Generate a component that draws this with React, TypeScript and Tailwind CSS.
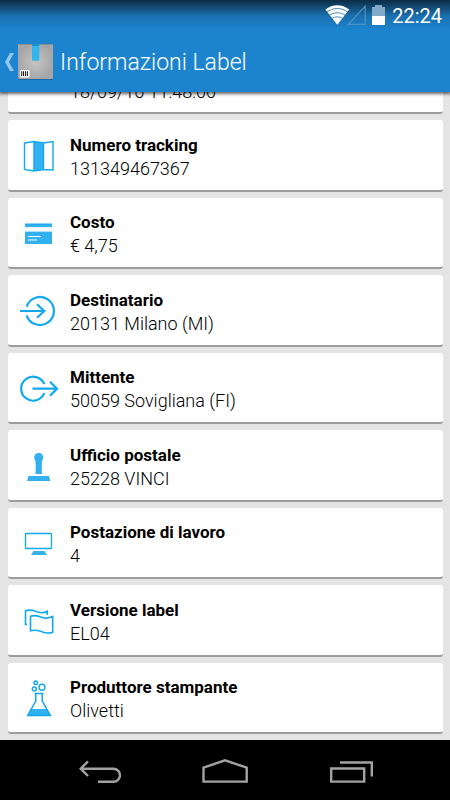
import type { ReactNode } from "react";

type Item = {
  title: string;
  value: string;
  icon: ReactNode;
};

const BLUE = "#33b0ef";
const LINE = "#12a8f0";

const MapIcon = () => (
  <>
    <path d="M15 4.5 24.5 6V32.5L15 34Z" fill={BLUE} />
    <path
      d="M5.5 6 15 4.5 24.5 6 34 4.5V33L24.5 32.5 15 34 5.5 32.5ZM15 4.5V34M24.5 6V32.5"
      fill="none"
      stroke={LINE}
      strokeWidth="1.4"
    />
  </>
);

const CardIcon = () => (
  <>
    <path d="M6 10H33V13H6Z" fill={BLUE} />
    <path d="M6 10H33M6 18H33" stroke={LINE} />
    <path d="M6 14H33M6 17H33" stroke="#d5eefb" />
    <path d="M6 18H33V30H6Z" fill={BLUE} />
    <path d="M9 22.5H22M9 26H18" stroke="#fff" strokeWidth="1.2" />
  </>
);

const InIcon = () => (
  <path
    d="M7.6 14.7A14 14 0 1 1 7.6 23.3M1 19H25M18 12.3 25.2 19 18 25.7"
    fill="none"
    stroke={LINE}
    strokeWidth="2.2"
  />
);

const OutIcon = () => (
  <path
    d="M25.3 15.2A12 12 0 1 0 25.3 24.2M13.5 19.7H38M31 12.8 38 19.7 31 26.6"
    fill="none"
    stroke={LINE}
    strokeWidth="2.2"
  />
);

const StampIcon = () => (
  <>
    <circle cx="19.7" cy="10.5" r="4.5" fill={BLUE} />
    <path d="M16.2 12.5H23.2L22.7 20 23 27H16.4L16.8 20Z" fill={BLUE} />
    <path d="M9.5 29H30L31.3 34H8Z" fill={BLUE} />
  </>
);

const MonitorIcon = () => (
  <>
    <rect x="6.5" y="9.5" width="26" height="15" rx="0.5" fill="none" stroke={LINE} strokeWidth="1.3" />
    <path d="M14.5 27H25.5L28 31H12Z" fill={BLUE} />
  </>
);

const FlagsIcon = () => (
  <path
    d="M8 22.5H6.5V8.8C12 7 15 8.5 19 10C22 11 26 10.6 28.3 9.2V13M11.5 14.2C18 12.2 20 15 25 16C28 16.5 31 15.5 33.7 14.4V30.4C30 31.2 27 31.2 24 30.2C20 28.8 17 27 11.5 28.8Z"
    fill="none"
    stroke={LINE}
    strokeWidth="1.6"
  />
);

const FlaskIcon = () => (
  <>
    <path d="M12 30H28L31.5 36.5H8.5Z" fill={BLUE} />
    <path
      d="M15.5 14.5H24.5M16.8 14.5V22L8.6 36.5H31.4L23.2 22V14.5"
      fill="none"
      stroke={LINE}
      strokeWidth="1.5"
    />
    <g fill="none" stroke={LINE} strokeWidth="1.4">
      <circle cx="16.7" cy="3.8" r="1.8" />
      <circle cx="15.3" cy="10" r="2" />
      <circle cx="23" cy="8.2" r="3" />
    </g>
  </>
);

const items: Item[] = [
  { title: "Numero tracking", value: "131349467367", icon: <MapIcon /> },
  { title: "Costo", value: "€ 4,75", icon: <CardIcon /> },
  { title: "Destinatario", value: "20131 Milano (MI)", icon: <InIcon /> },
  { title: "Mittente", value: "50059 Sovigliana (FI)", icon: <OutIcon /> },
  { title: "Ufficio postale", value: "25228 VINCI", icon: <StampIcon /> },
  { title: "Postazione di lavoro", value: "4", icon: <MonitorIcon /> },
  { title: "Versione label", value: "EL04", icon: <FlagsIcon /> },
  { title: "Produttore stampante", value: "Olivetti", icon: <FlaskIcon /> },
];

const StatusBar = () => (
  <div className="flex h-8 items-center justify-end pr-2 text-white">
    <svg className="h-8 w-[68px]" viewBox="322 0 68 32" aria-hidden="true">
      <path d="M338.3 24.7 326.4 9.4C333.5 3.7 343.1 3.7 350.2 9.4Z" fill="#fff" />
      <g fill="none" stroke="#1b6aa5" strokeWidth="0.8">
        <path d="M327.5 12.4C334 7.2 342.6 7.2 349.1 12.4" />
        <path d="M330 15.6C335 11.8 341.6 11.8 346.6 15.6" />
        <path d="M332.5 18.8C336 16.2 340.6 16.2 344.1 18.8" />
      </g>
      <path d="M349.3 24.3H366.2V6.3Z" fill="none" stroke="#4f93c4" strokeWidth="1.2" />
      <path d="M376 5H383V7H386V16H373V7H376Z" fill="#7fa9c7" />
      <path d="M373 16H386V25H373Z" fill="#fff" />
    </svg>
    <span className="ml-[3px] text-[20px] leading-8">22:24</span>
  </div>
);

const PackageIcon = () => (
  <svg className="h-9 w-9" viewBox="0 0 36 36" aria-hidden="true">
    <defs>
      <radialGradient id="box">
        <stop offset="0" stopColor="#c6c6c6" />
        <stop offset="1" stopColor="#a6a6a6" />
      </radialGradient>
    </defs>
    <rect x="0" y="1" width="35" height="35" rx="1" fill="#176aa6" />
    <rect x="0" y="0" width="35" height="35" rx="1" fill="url(#box)" />
    <path d="M0.5 0.5H34.5" stroke="#8d9296" />
    <path d="M14 1H21.3V17L20 16.3 18.8 17.3 17.6 16.3 16.4 17.3 15.2 16.3 14 17Z" fill="#33b5ee" />
    <path d="M14 0H21.3V2H14Z" fill="#1695cf" />
    <rect x="2" y="26" width="9.5" height="7.5" rx="1" fill="#fff" />
    <path d="M3.7 27.3V32M5.5 27.3V32M7.5 27.3V32M9.4 27.3V32" stroke="#222" strokeWidth="1.1" />
  </svg>
);

const Header = () => (
  <header className="relative z-10 shrink-0 bg-[#1c84cf] bg-linear-to-b from-[#0b2c45] from-0% via-[#1a70b0] via-[16px] to-[#1c84cf] to-[30px] shadow-[0_1px_3px_1px_rgba(0,0,0,0.6)]">
    <StatusBar />
    <div className="flex h-[60px] items-center">
      <a href="#" aria-label="Indietro" className="flex items-center pl-[5px]">
        <svg className="h-[18px] w-[13px]" viewBox="0 0 13 18" aria-hidden="true">
          <path d="M5 0H9L4 9 9 18H5L0 9Z" fill="#94c6ea" />
        </svg>
        <PackageIcon />
      </a>
      <h1 className="ml-[6px] pt-[2px] text-[23px] font-light text-white">Informazioni Label</h1>
    </div>
  </header>
);

const cardStyle = "rounded-[3px] border-b-2 border-[#9c9c9c] bg-white";

const InfoCard = ({ title, value, icon }: Item) => (
  <li className={`flex min-h-16 flex-1 items-center gap-[11px] pt-1 pl-[11px] ${cardStyle}`}>
    <svg className="h-10 w-10 shrink-0" viewBox="0 0 40 40" aria-hidden="true">
      {icon}
    </svg>
    <div className="leading-6">
      <h2 className="text-[17px] font-bold">{title}</h2>
      <p className="text-[18px] font-light">{value}</p>
    </div>
  </li>
);

const NavBar = () => (
  <nav className="grid h-[60px] shrink-0 grid-cols-3 bg-black px-[37px]">
    <button aria-label="Back" className="flex items-center justify-center">
      <svg className="h-[30px] w-12" viewBox="0 0 48 30" fill="none" stroke="#a3a3a3" strokeWidth="2.4" aria-hidden="true">
        <path d="M12 6.3 4.7 13.7 12 21M4.7 13.7H37.5A6.5 6.5 0 0 1 37.5 26.7H22" />
      </svg>
    </button>
    <button aria-label="Home" className="flex items-center justify-center">
      <svg className="h-[30px] w-12" viewBox="0 0 48 30" fill="none" stroke="#a3a3a3" strokeWidth="2.4" aria-hidden="true">
        <path d="M2.5 12.7 24 5.3 45.7 12.7V26.6H2.5Z" />
      </svg>
    </button>
    <button aria-label="Recents" className="flex items-center justify-center">
      <svg className="h-[30px] w-12" viewBox="0 0 48 30" fill="none" stroke="#a3a3a3" strokeWidth="2.4" aria-hidden="true">
        <path d="M5.2 13.5H38.2V26.6H5.2ZM14 7.5H45.8V21.5" />
      </svg>
    </button>
  </nav>
);

const App = () => {
  return (
    <div className="flex h-screen flex-col bg-[#e4e4e4] font-[Roboto,sans-serif] text-black">
      <Header />
      <main className="flex min-h-0 flex-1 flex-col overflow-hidden pr-[7px] pb-[6px] pl-2">
        {/* last row of the card scrolled under the action bar */}
        <div className="mb-[6px] flex h-[22px] shrink-0 items-end">
          <div className={`flex h-[72px] w-full items-end gap-[11px] pb-2 pl-[11px] ${cardStyle}`}>
            <svg className="h-10 w-10 shrink-0" viewBox="0 0 40 40" aria-hidden="true">
              <path d="M6 12H33V28H6Z" fill={BLUE} />
            </svg>
            <p className="text-[18px] leading-6 font-light">18/09/16 11:48:00</p>
          </div>
        </div>
        <ul className="flex flex-1 flex-col gap-[6px]">
          {items.map((item) => (
            <InfoCard key={item.title} {...item} />
          ))}
        </ul>
      </main>
      <NavBar />
    </div>
  );
};

export default App;
